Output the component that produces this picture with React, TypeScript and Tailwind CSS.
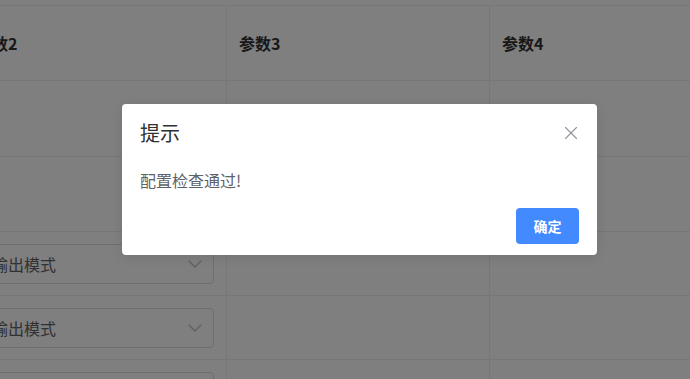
import { FiChevronDown, FiX } from 'react-icons/fi'

const font = { fontFamily: '"Noto Sans CJK SC", "Noto Sans", sans-serif' }

function ModeSelect() {
  return (
    <div className="flex h-10 w-[238px] items-center justify-between rounded-[4px] border border-[#dcdfe6] bg-white pl-[15px] pr-[6px] text-[16px] text-[#606266]">
      <span>输出模式</span>
      <FiChevronDown className="h-6 w-6 text-[#c0c4cc]" strokeWidth={1.5} />
    </div>
  )
}

function Row({ height, cells }: { height: string; cells: [React.ReactNode, React.ReactNode, React.ReactNode] }) {
  return (
    <div className={`flex border-b border-[#ebeef5] ${height}`}>
      <div className="flex w-[263px] shrink-0 items-center border-r border-[#ebeef5] px-3">{cells[0]}</div>
      <div className="flex w-[263px] shrink-0 items-center border-r border-[#ebeef5] px-3">{cells[1]}</div>
      <div className="flex w-[263px] shrink-0 items-center px-3">{cells[2]}</div>
    </div>
  )
}

export default function App() {
  const head = (t: string) => <span className="text-[16px] font-bold text-[#303133]">{t}</span>
  return (
    <div className="relative h-[379px] w-[690px] overflow-hidden bg-white" style={font}>
      <div className="ml-[-36px] mt-[5px] border-t border-[#ebeef5]">
        <Row height="h-[75px]" cells={[head('参数2'), head('参数3'), head('参数4')]} />
        <Row height="h-[76px]" cells={[null, null, null]} />
        <Row height="h-[75px]" cells={[null, null, null]} />
        <Row height="h-[64px]" cells={[<ModeSelect />, null, null]} />
        <Row height="h-[64px]" cells={[<ModeSelect />, null, null]} />
        <Row height="h-[64px]" cells={[<ModeSelect />, null, null]} />
      </div>

      <div className="absolute inset-0 bg-black/50 pl-[122px] pt-[104px]">
        <div className="w-[475px] rounded-[4px] bg-white px-[18px] pb-[11px] pt-[15px] shadow-[0_2px_12px_rgba(0,0,0,0.1)]">
          <div className="flex items-center justify-between">
            <span className="text-[20px] leading-7 text-[#303133]">提示</span>
            <FiX className="mr-[-3px] h-[22px] w-[22px] text-[#909399]" strokeWidth={1.2} />
          </div>
          <p className="mt-[21px] text-[16px] leading-6 text-[#606266]">配置检查通过!</p>
          <div className="mt-[16px] flex justify-end">
            <button className="h-9 w-[63px] rounded-[4px] bg-[#448aff] text-[14px] font-semibold text-white">
              确定
            </button>
          </div>
        </div>
      </div>
    </div>
  )
}
